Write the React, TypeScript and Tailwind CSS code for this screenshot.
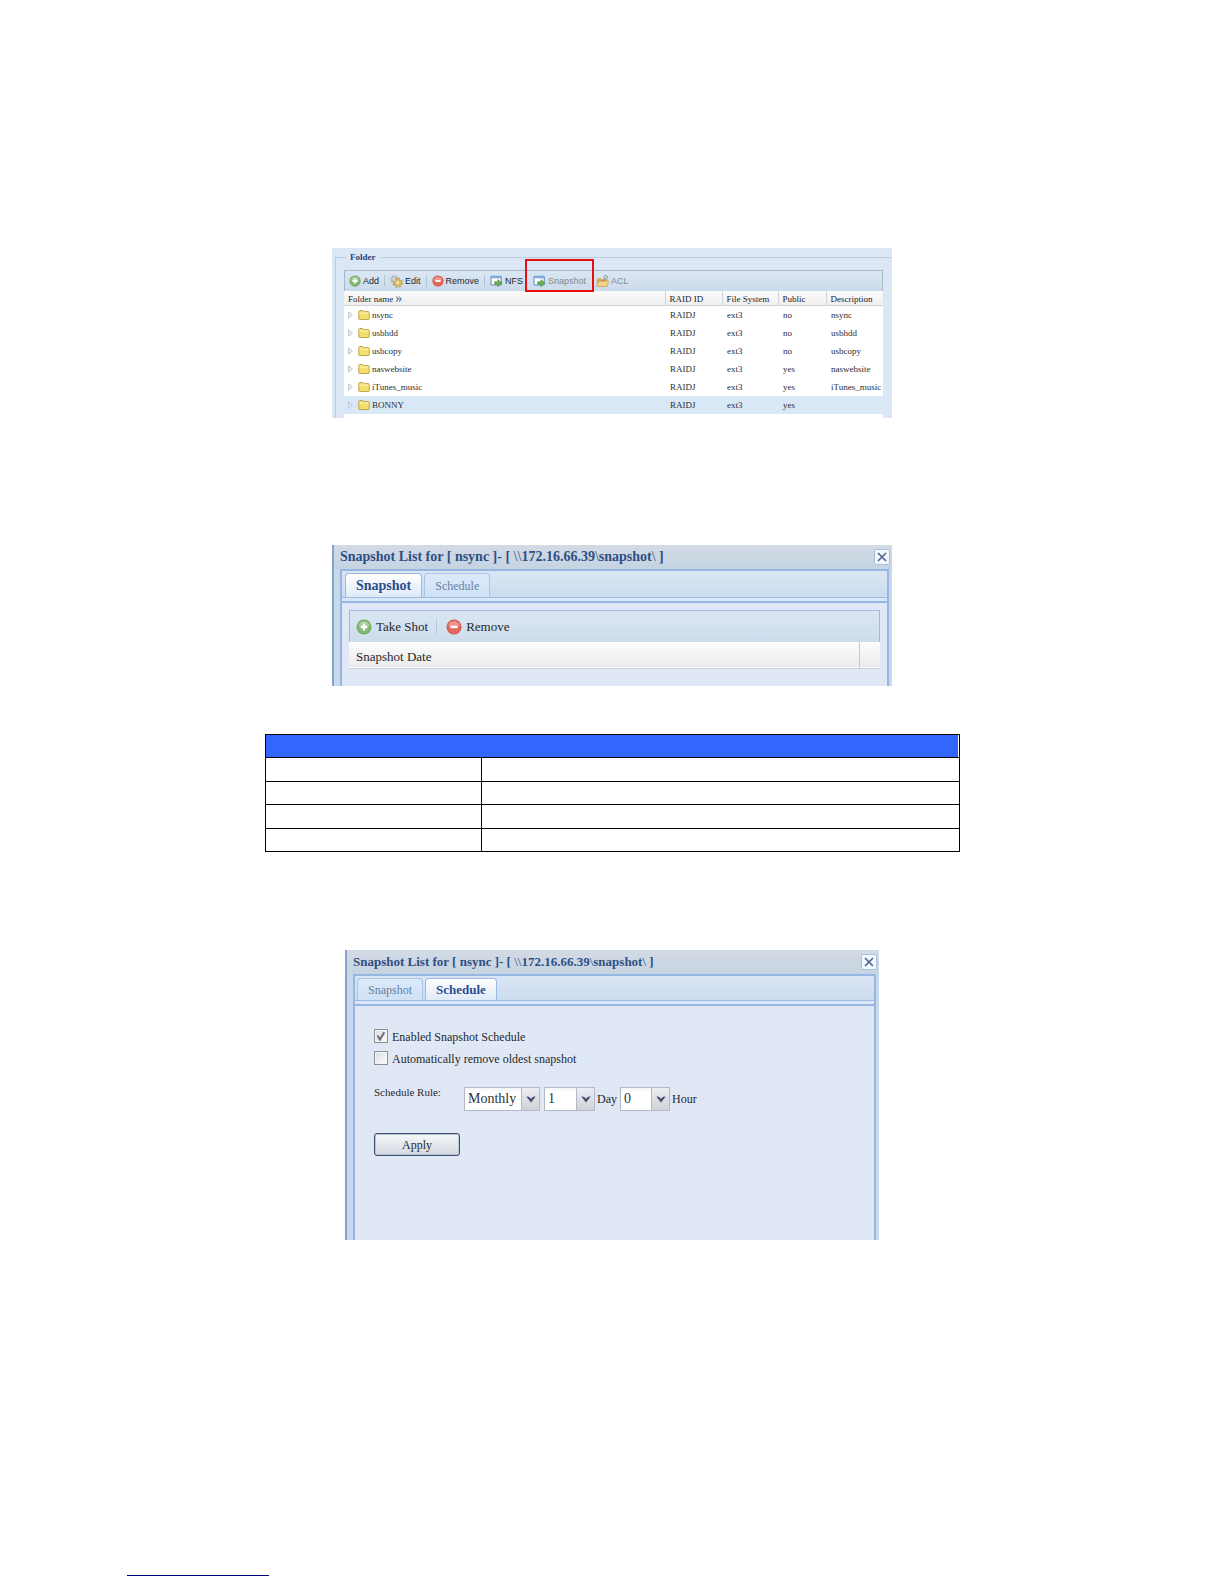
import { useState, type ReactNode } from "react";
import clsx from "clsx";

type Folder = {
  name: string;
  raid: string;
  fs: string;
  isPublic: string;
  description: string;
};

const folders: Folder[] = [
  { name: "nsync", raid: "RAIDJ", fs: "ext3", isPublic: "no", description: "nsync" },
  { name: "usbhdd", raid: "RAIDJ", fs: "ext3", isPublic: "no", description: "usbhdd" },
  { name: "usbcopy", raid: "RAIDJ", fs: "ext3", isPublic: "no", description: "usbcopy" },
  { name: "naswebsite", raid: "RAIDJ", fs: "ext3", isPublic: "yes", description: "naswebsite" },
  { name: "iTunes_music", raid: "RAIDJ", fs: "ext3", isPublic: "yes", description: "iTunes_music" },
  { name: "BONNY", raid: "RAIDJ", fs: "ext3", isPublic: "yes", description: "" },
];

const RoundIcon = ({ kind, className }: { kind: "add" | "remove"; className: string }) => {
  const add = kind === "add";
  return (
    <svg viewBox="0 0 16 16" className={className} aria-hidden="true">
      <circle cx="8" cy="8" r="7.5" fill={add ? "#6fa85f" : "#cf5a50"} />
      <circle cx="8" cy="8" r="6.5" fill={add ? "#83b972" : "#e4685d"} />
      <path d="M2.4 7a5.7 5.7 0 0 1 11.2 0z" fill="#fff" opacity=".3" />
      <path d={add ? "M8 4.6v6.8M4.6 8h6.8" : "M4.4 8h7.2"} stroke="#fff" strokeWidth="2.4" />
    </svg>
  );
};

const GearIcon = () => (
  <svg viewBox="0 0 16 16" className="size-[13px] shrink-0" aria-hidden="true">
    <circle cx="5.5" cy="5.5" r="4" fill="none" stroke="#a9aeb5" strokeWidth="2.4" strokeDasharray="2 1.1" />
    <circle cx="5.5" cy="5.5" r="3" fill="none" stroke="#c3c6ca" strokeWidth="1.6" />
    <circle cx="9.5" cy="9.5" r="5" fill="none" stroke="#c39b4a" strokeWidth="2.6" strokeDasharray="2.2 1.7" />
    <circle cx="9.5" cy="9.5" r="3.4" fill="#f0d080" stroke="#d9b35c" strokeWidth="2" />
    <circle cx="9.5" cy="9.5" r="1.4" fill="#e6edf6" />
  </svg>
);

const WindowGoIcon = () => (
  <svg viewBox="0 0 16 16" className="h-3 w-[13px] shrink-0" aria-hidden="true">
    <rect x=".7" y="1.7" width="13.6" height="11.6" rx="1" fill="#fff" stroke="#5f8fc4" strokeWidth="1.4" />
    <path d="M1 2h13v2.4H1z" fill="#7fa9dc" />
    <path d="M5.5 9h4.2V6l5.8 4.8-5.8 4.8v-3H5.5z" fill="#6aae4e" stroke="#4a8a3a" strokeWidth=".7" />
  </svg>
);

const AclIcon = () => (
  <svg viewBox="0 0 16 16" className="size-[13px] shrink-0" aria-hidden="true">
    <path d="M1 14V5l1-1h4l1 1.4h7V14z" fill="#d6ab53" />
    <path d="M1 14l2-6.4h12.4L14 14z" fill="#f3d58a" stroke="#c4983f" strokeWidth=".7" />
    <path d="M8 7.6l3.4-3.8" stroke="#8a8f99" strokeWidth="1.6" />
    <circle cx="12" cy="2.8" r="2.1" fill="#e4e7ee" stroke="#7d838f" strokeWidth="1.1" />
  </svg>
);

const FolderIcon = () => (
  <svg viewBox="0 0 16 14" className="h-[10px] w-3 shrink-0" aria-hidden="true">
    <path d="M.7 12.6V2l1-1.3h4.6L7.6 2.3h7l.7.8v9.5l-.7.7H1.4z" fill="#f3e06c" stroke="#b79a35" strokeWidth="1.2" />
    <path d="M1.6 4.4h12.8" stroke="#fdf6bb" strokeWidth="1.3" />
  </svg>
);

const Separator = () => <span className="mx-[5px] h-3 w-px border-l border-[#b3c3d6]" />;

const ToolButton = ({ icon, label, dim }: { icon: ReactNode; label: string; dim?: boolean }) => (
  <button
    type="button"
    className={clsx("flex items-center gap-[2px]", dim ? "text-[#84898f]" : "text-[#252a30]")}
  >
    {icon}
    {label}
  </button>
);

const FolderPanel = () => (
  <section className="w-full max-w-[560px] bg-[#dce7f5] pt-[3px] pl-[3px] text-[9px] leading-3">
    <fieldset className="min-w-0 border-t border-l border-[#bccce4] pt-[7px] pr-[9px] pl-2">
      <legend className="ml-[2px] px-1 font-bold text-[#2a4479]">Folder</legend>
      <div className="flex h-[21px] items-center border border-b-0 border-[#a9b9cc] bg-linear-to-b from-[#dae6f3] to-[#ccdbea] pl-1 font-['Liberation_Sans',sans-serif]">
        <ToolButton icon={<RoundIcon kind="add" className="size-3" />} label="Add" />
        <Separator />
        <ToolButton icon={<GearIcon />} label="Edit" />
        <Separator />
        <ToolButton icon={<RoundIcon kind="remove" className="size-3" />} label="Remove" />
        <Separator />
        <ToolButton icon={<WindowGoIcon />} label="NFS" />
        <div className="relative mx-[10px]">
          <ToolButton icon={<WindowGoIcon />} label="Snapshot" dim />
          <span className="pointer-events-none absolute -top-4 -right-2 -bottom-[5px] -left-2 border-2 border-[#e60f12]" />
        </div>
        <ToolButton icon={<AclIcon />} label="ACL" dim />
      </div>
      <div className="bg-white pb-1">
        <table className="w-full table-fixed border-collapse text-left">
          <thead>
            <tr className="h-[15px] bg-linear-to-b from-[#fbfbfb] to-[#eeeeef] text-[#20242a] shadow-[inset_0_-1px_0_#cfd2d6]">
              <th className="pl-1 font-normal">
                <div className="flex h-3 items-center gap-[2px]">
                  Folder name <span className="text-sm leading-3 font-bold text-[#5b7fae]">»</span>
                </div>
              </th>
              <th className="w-[57px] border-l border-[#d2d4d8] pl-1 font-normal">RAID ID</th>
              <th className="w-14 border-l border-[#d2d4d8] pl-1 font-normal">File System</th>
              <th className="w-12 border-l border-[#d2d4d8] pl-1 font-normal">Public</th>
              <th className="w-[57px] border-l border-[#d2d4d8] pl-1 font-normal">Description</th>
            </tr>
          </thead>
          <tbody className="text-[#2b2e33]">
            {folders.map((folder) => (
              <tr key={folder.name} className={clsx("h-[18px]", folder.name === "BONNY" && "bg-[#d9e8f7]")}>
                <td className="pl-1">
                  <div className="flex items-center">
                    <svg viewBox="0 0 5 8" className="mr-[5px] h-2 w-[5px]" aria-hidden="true">
                      <path d="M.6.8v6.4L4.4 4z" fill="#eceff2" stroke="#b4bac2" strokeWidth=".8" />
                    </svg>
                    <FolderIcon />
                    <span className="ml-[2px]">{folder.name}</span>
                  </div>
                </td>
                <td className="pl-[5px]">{folder.raid}</td>
                <td className="pl-[5px]">{folder.fs}</td>
                <td className="pl-[5px]">{folder.isPublic}</td>
                <td className="overflow-hidden pl-[5px]">{folder.description}</td>
              </tr>
            ))}
          </tbody>
        </table>
      </div>
    </fieldset>
  </section>
);

type TabName = "Snapshot" | "Schedule";

const Tabs = ({ active, compact }: { active: TabName; compact?: boolean }) => (
  <div
    className={clsx(
      "border-b border-[#9dbae6] bg-linear-to-b from-[#dae6f4] to-[#cbdcee] pt-[2px]",
      compact ? "px-[2px]" : "px-[3px]",
    )}
  >
    <div role="tablist" className="flex gap-[2px]">
      {["Snapshot", "Schedule"].map((tab) => (
        <button
          key={tab}
          type="button"
          role="tab"
          aria-selected={tab === active}
          className={clsx(
            "rounded-t border border-b-0 px-[10px]",
            compact ? "h-[22px]" : "h-6",
            tab === active
              ? "border-[#9dbae6] bg-linear-to-b from-white to-[#dfeaf8] font-bold text-[#2a4c8c]"
              : "border-[#a9c4ea] bg-linear-to-b from-[#dceafa] to-[#d0e1f6] text-xs text-[#6680a8]",
            tab === active && (compact ? "text-[13px]" : "text-sm"),
          )}
        >
          {tab}
        </button>
      ))}
    </div>
  </div>
);

type WindowProps = {
  active: TabName;
  compact?: boolean;
  className: string;
  children: ReactNode;
};

const SnapshotWindow = ({ active, compact, className, children }: WindowProps) => (
  <section
    className={clsx(
      "flex w-full flex-col border-l-2 border-[#86a3cc] bg-[#c8d9ec] pr-[3px] pl-[6px]",
      className,
    )}
  >
    <header className="-mr-[3px] -ml-[6px] flex h-6 items-center justify-between bg-linear-to-b from-[#d3dae4] to-[#c5d4e2] pr-[2px] pl-[6px]">
      <h2 className={clsx("font-bold whitespace-nowrap text-[#2f4f85]", compact ? "text-[13px]" : "text-sm")}>
        Snapshot List for [ nsync ]- [ <span className="font-normal">\\</span>172.16.66.39
        <span className="font-normal">\</span>snapshot<span className="font-normal">\</span> ]
      </h2>
      <button type="button" aria-label="Close" className="rounded-[2px] border border-[#a9c0dc] bg-[#f3f8fe] p-[2px]">
        <svg viewBox="0 0 10 10" className="size-[10px]" aria-hidden="true">
          <path d="M1 1l8 8M9 1L1 9" stroke="#4d6890" strokeWidth="1.7" />
        </svg>
      </button>
    </header>
    <div className="flex grow flex-col border-2 border-b-0 border-[#97b6e4]">
      <Tabs active={active} compact={compact} />
      <div className="h-[3px] bg-[#d8e8f8]" />
      <div className="grow border-t-2 border-[#97b6e4] bg-[#e0e8f6]">{children}</div>
    </div>
  </section>
);

const SnapshotList = () => (
  <div className="px-[7px] pt-[7px]">
    <div className="flex h-8 items-center border border-b-0 border-[#9fb9e0] bg-linear-to-b from-[#dae6f2] to-[#cddcec] pl-[6px] text-[13px] text-[#24282e]">
      <button type="button" className="flex items-center gap-1">
        <RoundIcon kind="add" className="size-4" />
        Take Shot
      </button>
      <span className="mr-[9px] ml-2 h-4 border-l border-[#b4c6dc]" />
      <button type="button" className="flex items-center gap-1">
        <RoundIcon kind="remove" className="size-4" />
        Remove
      </button>
    </div>
    <table className="w-full border-collapse text-left text-[13px] text-[#24282e]">
      <thead>
        <tr className="h-[26px] border-b border-[#cbd0d7] bg-linear-to-b from-[#fbfcfc] to-[#ebebec]">
          <th className="pt-[3px] pl-[7px] font-normal">Snapshot Date</th>
          <td className="w-[21px] border-l border-[#c6cacf]" />
        </tr>
      </thead>
    </table>
  </div>
);

type PickerProps = { label: string; options: string[]; className: string };

const Picker = ({ label, options, className }: PickerProps) => (
  <span className={clsx("relative h-6", className)}>
    <select
      aria-label={label}
      className="h-full w-full appearance-none border border-[#b5b8c8] bg-linear-to-b from-[#f3f4f6] to-white to-20% pl-[3px] text-sm leading-5 text-[#30343a]"
    >
      {options.map((option) => (
        <option key={option}>{option}</option>
      ))}
    </select>
    <span className="pointer-events-none absolute inset-y-0 right-0 flex w-[19px] items-center justify-center border border-[#b5b8c8] bg-linear-to-b from-[#eceef2] to-[#cfd2d8]">
      <svg viewBox="0 0 10 7" className="h-[7px] w-[10px]" aria-hidden="true">
        <path d="M.3.6l2.5.2L5 2.8 7.2.8 9.7.6 5 6.4z" fill="#454a74" />
      </svg>
    </span>
  </span>
);

const CheckRow = ({ label, initial }: { label: string; initial: boolean }) => {
  const [checked, setChecked] = useState(initial);
  return (
    <label className="flex h-[22px] items-center gap-1">
      <span className="relative size-[14px]">
        <input
          type="checkbox"
          checked={checked}
          onChange={(e) => setChecked(e.target.checked)}
          className="block size-[14px] appearance-none border border-[#8e9298] bg-linear-to-br from-[#dcdee0] to-[#fafafa] shadow-[inset_0_0_0_1px_#f4f4f4]"
        />
        {checked && (
          <svg viewBox="0 0 14 14" className="pointer-events-none absolute inset-0" aria-hidden="true">
            <path d="M3.5 6.5l2.4 4 4.4-7.3" fill="none" stroke="#6a6e80" strokeWidth="2" />
          </svg>
        )}
      </span>
      <span className="pt-[2px]">{label}</span>
    </label>
  );
};

const ScheduleForm = () => (
  <form className="px-[19px] pt-[19px] text-xs text-[#24282e]" onSubmit={(e) => e.preventDefault()}>
    <CheckRow label="Enabled Snapshot Schedule" initial />
    <CheckRow label="Automatically remove oldest snapshot" initial={false} />
    <div className="mt-[17px] flex">
      <span className="w-[90px] text-[11px] leading-3">Schedule Rule:</span>
      <div className="flex items-center pt-px">
        <Picker label="Interval" options={["Monthly", "Weekly", "Daily"]} className="mr-1 w-[76px]" />
        <Picker label="Day" options={["1", "2", "3"]} className="w-[51px]" />
        <span className="mx-[2px] w-[21px]">Day</span>
        <Picker label="Hour" options={["0", "1", "2"]} className="w-[50px]" />
        <span className="ml-[2px]">Hour</span>
      </div>
    </div>
    <button
      type="submit"
      className="mt-[22px] flex h-[23px] w-[86px] items-center justify-center rounded-[3px] border border-[#3f5273] bg-linear-to-b from-[#f7f9fa] to-[#d3d9e0] shadow-[inset_0_0_0_1px_#b9c4d2]"
    >
      Apply
    </button>
  </form>
);

const FieldTable = () => (
  <table className="w-full max-w-[695px] table-fixed border-collapse border border-black">
    <colgroup>
      <col className="w-[216px]" />
      <col />
    </colgroup>
    <tbody>
      <tr className="h-[23px]">
        <td colSpan={2} className="border border-black bg-[#3366ff] shadow-[inset_-1px_0_0_#ffffff]" />
      </tr>
      {[1, 2, 3, 4].map((row) => (
        <tr key={row} className="h-[23px] even:h-6">
          <td className="border border-black" />
          <td className="border border-black" />
        </tr>
      ))}
    </tbody>
  </table>
);

export default function App() {
  return (
    <div className="flex min-h-screen flex-col bg-white font-['Liberation_Serif',serif]">
      <main className="flex flex-col items-center pt-[248px]">
        <FolderPanel />
        <div className="mt-[127px] flex w-full max-w-[560px]">
          <SnapshotWindow active="Snapshot" className="min-h-[141px]">
            <SnapshotList />
          </SnapshotWindow>
        </div>
        <div className="mt-12 flex w-full justify-center">
          <FieldTable />
        </div>
        <div className="mt-[98px] flex w-full max-w-[534px]">
          <SnapshotWindow active="Schedule" compact className="min-h-[290px]">
            <ScheduleForm />
          </SnapshotWindow>
        </div>
      </main>
      <footer className="mt-auto px-[127px] pb-2">
        <hr className="w-[142px] border-[#000080]" />
      </footer>
    </div>
  );
}
